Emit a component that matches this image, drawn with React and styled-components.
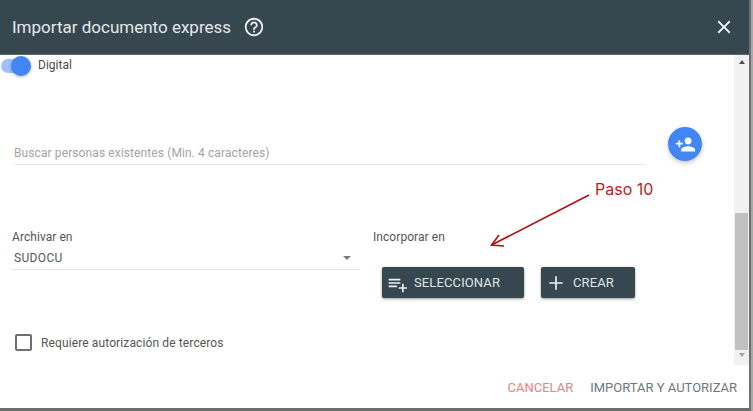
import React from "react";
import styled, { createGlobalStyle } from "styled-components";

const Global = createGlobalStyle`
  html, body { margin: 0; padding: 0; width: 753px; height: 411px; overflow: hidden; background: #7d7d7d; }
  * { box-sizing: border-box; }
  body { font-family: Roboto, "Liberation Sans", sans-serif; }
`;

const Page = styled.div`
  position: relative;
  width: 753px;
  height: 411px;
  background: linear-gradient(90deg, #6f6f6f 0, #6f6f6f 2px, #a9a9a9 2px, #a9a9a9 100%);
  background-size: 4px 100%;
  background-position: 749px 0;
  background-repeat: no-repeat;
  background-color: #6c6c6c;
`;

const Dialog = styled.div`
  width: 749px;
  height: 408px;
  background: #fff;
  display: flex;
  flex-direction: column;
`;

const Header = styled.header`
  height: 55px;
  flex: none;
  background: #37474f;
  border-bottom: 1px solid #5c6b72;
  color: #eceff1;
  display: flex;
  align-items: center;
  padding: 0 15px 0 12px;
`;

const Title = styled.h1`
  margin: 0;
  font-size: 17px;
  font-weight: 400;
  line-height: 54px;
  color: #e4e8ea;
`;

const HelpIcon = styled.svg`
  width: 22px;
  height: 22px;
  margin-left: 12px;
  fill: #eef1f2;
`;

const CloseIcon = styled.svg`
  width: 22px;
  height: 22px;
  margin-left: auto;
  margin-right: -1px;
  fill: #f1f4f5;
`;

const BodyWrap = styled.div`
  flex: 1;
  min-height: 0;
  display: flex;
`;

const Content = styled.main`
  position: relative;
  flex: 1;
  min-width: 0;
  padding-top: 1px;
`;

const ToggleRow = styled.div`
  display: flex;
  align-items: center;
  height: 20px;
`;

const Track = styled.span`
  position: relative;
  display: block;
  width: 28px;
  height: 14px;
  margin-left: 1px;
  border-radius: 7px;
  background: #a0c0fb;
`;

const Knob = styled.span`
  position: absolute;
  top: -3px;
  right: -2px;
  width: 20px;
  height: 20px;
  border-radius: 50%;
  background: #4285f4;
  box-shadow: 0 1px 3px rgba(0, 0, 0, 0.3);
`;

const ToggleLabel = styled.span`
  margin-left: 9px;
  font-size: 12px;
  color: #4a4a4a;
  position: relative;
  top: -1px;
`;

const SearchRow = styled.div`
  display: flex;
  align-items: flex-end;
  margin-top: 52px;
  padding-left: 14px;
  height: 37px;
`;

const SearchField = styled.div`
  width: 632px;
  height: 21px;
  border-bottom: 1px solid #e6e6e6;
  font-size: 12px;
  line-height: 16px;
  letter-spacing: 0.1px;
  color: #a3a3a3;
  padding: 1px 0 0 0;
`;

const Fab = styled.button`
  width: 34px;
  height: 34px;
  margin: -1px 0 3px 22px;
  align-self: flex-start;
  border: none;
  border-radius: 50%;
  padding: 0;
  background: #4285f4;
  display: flex;
  align-items: center;
  justify-content: center;
  box-shadow: 0 2px 5px rgba(0, 0, 0, 0.22);
  svg { width: 21px; height: 21px; fill: #fff; }
`;

const Columns = styled.div`
  display: flex;
  margin-top: 65px;
`;

const ArchiveCol = styled.div`
  width: 348px;
  margin-left: 12px;
`;

const FieldLabel = styled.div`
  font-size: 12px;
  line-height: 14px;
  letter-spacing: 0.06px;
  color: #555;
`;

const SelectBox = styled.div`
  height: 24px;
  margin-top: 2px;
  padding: 0 9px 0 2px;
  border-bottom: 1px solid #e3e3e3;
  display: flex;
  justify-content: space-between;
  align-items: center;
  font-size: 12px;
  letter-spacing: 0.35px;
  color: #555;
`;

const Caret = styled.span`
  width: 0;
  height: 0;
  border-left: 4px solid transparent;
  border-right: 4px solid transparent;
  border-top: 4px solid #7a7a7a;
`;

const IncorporateCol = styled.div`
  margin-left: 13px;
`;

const ButtonRow = styled.div`
  display: flex;
  gap: 17px;
  margin: 23px 0 0 9px;
`;

const ActionButton = styled.button`
  height: 31px;
  width: ${(p) => p.$w}px;
  border: none;
  border-radius: 2px;
  background: #37474f;
  color: #dfe3e5;
  font-family: inherit;
  font-size: 13px;
  font-weight: 400;
  letter-spacing: 0.12px;
  display: flex;
  align-items: center;
  padding: 0 0 0 ${(p) => p.$pad}px;
  gap: ${(p) => p.$gap}px;
  box-shadow: 0 1px 3px rgba(0, 0, 0, 0.4);
  svg { width: 20px; height: 20px; fill: #eef0f1; flex: none; }
`;

const CheckRow = styled.label`
  display: flex;
  align-items: center;
  margin: 35px 0 0 15px;
  height: 18px;
`;

const CheckBox = styled.span`
  width: 17px;
  height: 17px;
  border: 2px solid #6f6f6f;
  border-radius: 2px;
`;

const CheckLabel = styled.span`
  margin-left: 9px;
  font-size: 12px;
  line-height: 16px;
  letter-spacing: 0.12px;
  color: #555;
  padding-top: 2px;
`;

const Annotation = styled.svg`
  position: absolute;
  left: 480px;
  top: 124px;
  width: 120px;
  height: 75px;
  overflow: visible;
`;

const AnnotationText = styled.span`
  position: absolute;
  left: 595px;
  top: 125px;
  font-family: Inter, Roboto, sans-serif;
  font-size: 16px;
  line-height: 18px;
  color: #b81c1c;
`;

const Scrollbar = styled.div`
  width: 15px;
  flex: none;
  background: #f1f1f1;
  display: flex;
  flex-direction: column;
  align-items: center;
  position: relative;
`;

const ArrowBtn = styled.span`
  width: 0;
  height: 0;
  border-left: 3.5px solid transparent;
  border-right: 3.5px solid transparent;
  margin-top: ${(p) => p.$top}px;
  ${(p) => (p.$up ? "border-bottom: 4px solid #505050;" : "border-top: 4px solid #a3a3a3;")}
`;

const Thumb = styled.div`
  width: 13px;
  height: 137px;
  margin-top: 149px;
  background: #c1c1c1;
`;

const Footer = styled.footer`
  flex: none;
  height: 43px;
  display: flex;
  justify-content: flex-end;
  align-items: center;
  gap: 17px;
  padding: 1px 12px 0 0;
  font-size: 13px;
  font-weight: 400;
`;

const FooterAction = styled.button`
  border: none;
  background: none;
  padding: 0;
  font: inherit;
  color: ${(p) => p.$color};
`;

export default function App() {
  return (
    <Page>
      <Global />
      <Dialog>
        <Header>
          <Title>Importar documento express</Title>
          <HelpIcon viewBox="0 0 24 24">
            <path d="M11 18h2v-2h-2v2zm1-16C6.48 2 2 6.48 2 12s4.48 10 10 10 10-4.48 10-10S17.52 2 12 2zm0 18c-4.41 0-8-3.59-8-8s3.59-8 8-8 8 3.59 8 8-3.59 8-8 8zm0-14c-2.21 0-4 1.79-4 4h2c0-1.1.9-2 2-2s2 .9 2 2c0 2-3 1.75-3 5h2c0-2.25 3-2.5 3-5 0-2.21-1.79-4-4-4z" />
          </HelpIcon>
          <CloseIcon viewBox="0 0 24 24">
            <path d="M19 6.41 17.59 5 12 10.59 6.41 5 5 6.41 10.59 12 5 17.59 6.41 19 12 13.41 17.59 19 19 17.59 13.41 12z" />
          </CloseIcon>
        </Header>
        <BodyWrap>
          <Content>
            <ToggleRow>
              <Track><Knob /></Track>
              <ToggleLabel>Digital</ToggleLabel>
            </ToggleRow>
            <SearchRow>
              <SearchField>Buscar personas existentes (Min. 4 caracteres)</SearchField>
              <Fab aria-label="Agregar persona">
                <svg viewBox="0 0 24 24">
                  <path d="M15 12c2.21 0 4-1.79 4-4s-1.79-4-4-4-4 1.79-4 4 1.79 4 4 4zm-9-2V7H4v3H1v2h3v3h2v-3h3v-2H6zm9 4c-2.67 0-8 1.34-8 4v2h16v-2c0-2.66-5.33-4-8-4z" />
                </svg>
              </Fab>
            </SearchRow>
            <Columns>
              <ArchiveCol>
                <FieldLabel>Archivar en</FieldLabel>
                <SelectBox>
                  SUDOCU
                  <Caret />
                </SelectBox>
              </ArchiveCol>
              <IncorporateCol>
                <FieldLabel>Incorporar en</FieldLabel>
                <ButtonRow>
                  <ActionButton $w={142} $pad={5} $gap={7}>
                    <svg viewBox="0 0 24 24">
                      <path d="M2 7h14v2H2zM2 11h14v2H2zM2 15h10v2H2zM18 13h2v4h4v2h-4v4h-2v-4h-4v-2h4z" />
                    </svg>
                    SELECCIONAR
                  </ActionButton>
                  <ActionButton $w={94} $pad={5} $gap={7}>
                    <svg viewBox="0 0 24 24">
                      <path d="M20 13h-7v7h-2v-7H4v-2h7V4h2v7h7z" />
                    </svg>
                    CREAR
                  </ActionButton>
                </ButtonRow>
              </IncorporateCol>
            </Columns>
            <CheckRow>
              <CheckBox />
              <CheckLabel>Requiere autorización de terceros</CheckLabel>
            </CheckRow>
            <Annotation viewBox="0 0 120 75">
              <path d="M109 16 L11.500 66" stroke="#b00f0f" strokeWidth="1.6" fill="none" />
              <path d="M19 56 L11.500 66 L24 67" stroke="#b00f0f" strokeWidth="1.6" fill="none" />
            </Annotation>
            <AnnotationText>Paso 10</AnnotationText>
          </Content>
          <Scrollbar>
            <ArrowBtn $up $top={5} />
            <Thumb />
            <ArrowBtn $top={3} />
          </Scrollbar>
        </BodyWrap>
        <Footer>
          <FooterAction $color="#ef8080">CANCELAR</FooterAction>
          <FooterAction $color="#6d767b">IMPORTAR Y AUTORIZAR</FooterAction>
        </Footer>
      </Dialog>
    </Page>
  );
}
